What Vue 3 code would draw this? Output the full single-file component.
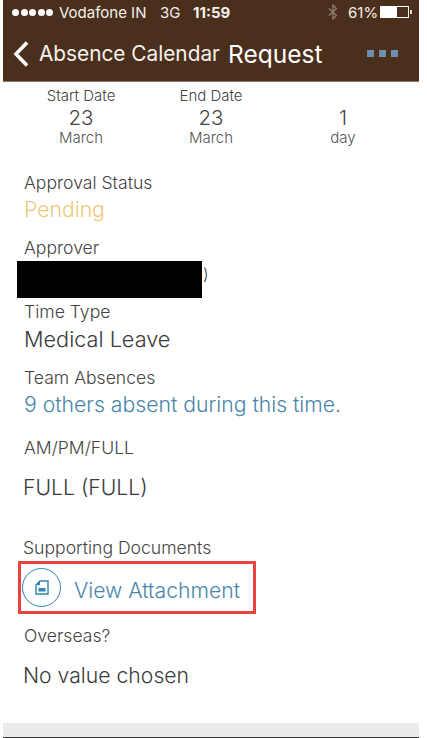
<template>
  <div class="page">
    <div class="phone">
      <header class="top">
        <div class="status">
          <span class="dots"><i v-for="n in 5" :key="n"></i></span>
          <span class="carrier">Vodafone IN</span>
          <span class="net">3G</span>
          <span class="time">11:59</span>
          <svg class="bt" width="10" height="16" viewBox="0 0 10 16"><path d="M1 4.500 8.500 11.500 5 15V1L8.500 4.500 1 11.500" fill="none" stroke="#8d8178" stroke-width="1.200"/></svg>
          <span class="pct">61%</span>
          <span class="battery"><b></b></span>
        </div>
        <div class="nav">
          <svg class="back" width="18" height="28" viewBox="0 0 18 28"><path d="M15 2.500 4 14 15 25.500" fill="none" stroke="#fff" stroke-width="3.600"/></svg>
          <span class="crumb">Absence Calendar</span>
          <span class="title">Request</span>
          <span class="more"><i></i><i></i><i></i></span>
        </div>
      </header>

      <section class="dates">
        <div class="col first"><div class="cap">Start Date</div><div class="num">23</div><div class="unit">March</div></div>
        <div class="col second"><div class="cap">End Date</div><div class="num">23</div><div class="unit">March</div></div>
        <div class="col third"><div class="cap"></div><div class="num">1</div><div class="unit">day</div></div>
      </section>

      <main class="fields">
        <div class="label l-status">Approval Status</div>
        <div class="value pending">Pending</div>
        <div class="label l-approver">Approver</div>
        <div class="value approver">)<span class="mask"></span></div>
        <div class="label l-type">Time Type</div>
        <div class="value leave">Medical Leave</div>
        <div class="label l-team">Team Absences</div>
        <div class="value link">9 others absent during this time.</div>
        <div class="label l-ampm">AM/PM/FULL</div>
        <div class="value plain v-full">FULL (FULL)</div>
        <div class="label l-docs">Supporting Documents</div>
        <div class="attach">
          <span class="circle">
            <svg width="14" height="15" viewBox="0 0 14 15"><path d="M5 1H13V14H1V5Z" fill="none" stroke="#2f86ad" stroke-width="1.400"/><path d="M1 5H5V1Z" fill="#2f86ad"/><rect x="3.500" y="8" width="7" height="3.500" fill="#2f86ad"/></svg>
          </span>
          <span class="attach-text">View Attachment</span>
        </div>
        <div class="label l-over">Overseas?</div>
        <div class="value plain v-none">No value chosen</div>
      </main>

      <footer class="bar"></footer>
    </div>
  </div>
</template>

<script setup>
</script>

<style>
html, body { margin: 0; background: #fff; }
</style>

<style scoped>
.page { width: 427px; height: 738px; overflow: hidden; background: #fff; font-family: Inter, "Liberation Sans", Arial, sans-serif; font-weight: 300; }
.phone { position: relative; width: 416px; height: 738px; margin-left: 3px; display: flex; flex-direction: column; }
.top { height: 81px; background: #4a2f1c; color: #fff; flex: none; border-bottom: 1px solid #8a7a6c; box-sizing: content-box; }
.status { height: 24px; padding: 0 0 2px 9px; display: flex; align-items: center; font-size: 15px; font-weight: 400; color: #f4f0ec; white-space: nowrap; }
.dots { display: flex; gap: 1.500px; margin-right: 6px; }
.dots i { width: 7px; height: 7px; border-radius: 50%; background: #fff; }
.carrier { width: 101px; }
.net { width: 33px; }
.time { font-weight: 700; width: 135px; }
.bt { margin-right: 10px; }
.pct { width: 32px; }
.battery { position: relative; width: 29px; height: 12px; box-sizing: border-box; border: 1px solid #fff; }
.battery b { display: block; width: 60%; height: 100%; background: #fff; }
.battery::after { content: ""; position: absolute; right: -4px; top: 3px; width: 2px; height: 4px; background: #ddd; }
.nav { height: 55px; display: flex; align-items: center; padding-left: 9px; }
.back { margin-right: 9px; }
.crumb { font-size: 20.800px; font-weight: 400; width: 189px; color: #f5f1ed; white-space: nowrap; }
.title { font-size: 24.500px; font-weight: 400; width: 139px; white-space: nowrap; }
.more { display: flex; gap: 5px; }
.more i { width: 7px; height: 7px; background: #6f8fae; }
.dates { height: 69px; flex: none; display: flex; text-align: center; color: #444; padding-top: 6px; box-sizing: border-box; height: 75px; }
.col { width: 130px; }
.first { margin-left: 13px; }
.third { width: 134px; margin-left: 0; }
.cap { font-size: 15px; height: 16px; line-height: 16px; }
.num { font-size: 20.500px; height: 25px; line-height: 25px; margin-top: 1px; }
.unit { font-size: 15px; height: 18px; line-height: 18px; color: #555; margin-top: -1px; }
.fields { flex: 1; padding-left: 21px; color: #3a3a3a; }
.label { font-size: 17.600px; line-height: 18px; height: 18px; color: #444; }
.value { font-size: 21.200px; line-height: 26px; height: 26px; white-space: nowrap; }
.l-status { margin-top: 17px; }
.pending { color: #eec77c; margin-top: 4px; }
.l-approver { margin-top: 17px; }
.approver { position: relative; font-size: 16px; padding-left: 179px; margin-top: 4px; }
.mask { position: absolute; left: -7px; top: 0; width: 185px; height: 37px; background: #000; }
.l-type { margin-top: 16px; }
.leave { font-size: 21.700px; margin-top: 5px; }
.l-team { margin-top: 17px; }
.link { color: #4a85ab; margin-top: 4px; }
.l-ampm { margin-top: 22px; }
.plain { margin-left: -1px; }
.v-full { margin-top: 17px; }
.l-docs { margin-top: 39px; margin-left: -1px; }
.attach { margin-top: 4px; margin-left: -6px; width: 238px; height: 53px; box-sizing: border-box; border: 3px solid #e8433f; display: flex; align-items: center; padding-left: 1px; }
.circle { width: 39px; height: 39px; box-sizing: border-box; border: 1.500px solid #2f86ad; border-radius: 50%; display: flex; align-items: center; justify-content: center; margin-right: 13px; }
.attach-text { color: #4a85ab; font-size: 21.200px; white-space: nowrap; padding-top: 4px; }
.l-over { margin-top: 13px; }
.v-none { margin-top: 17px; }
.bar { position: absolute; left: 0; right: 0; top: 723px; height: 14px; background: #ebebeb; border-bottom: 1px solid #333; box-sizing: content-box; }
</style>
